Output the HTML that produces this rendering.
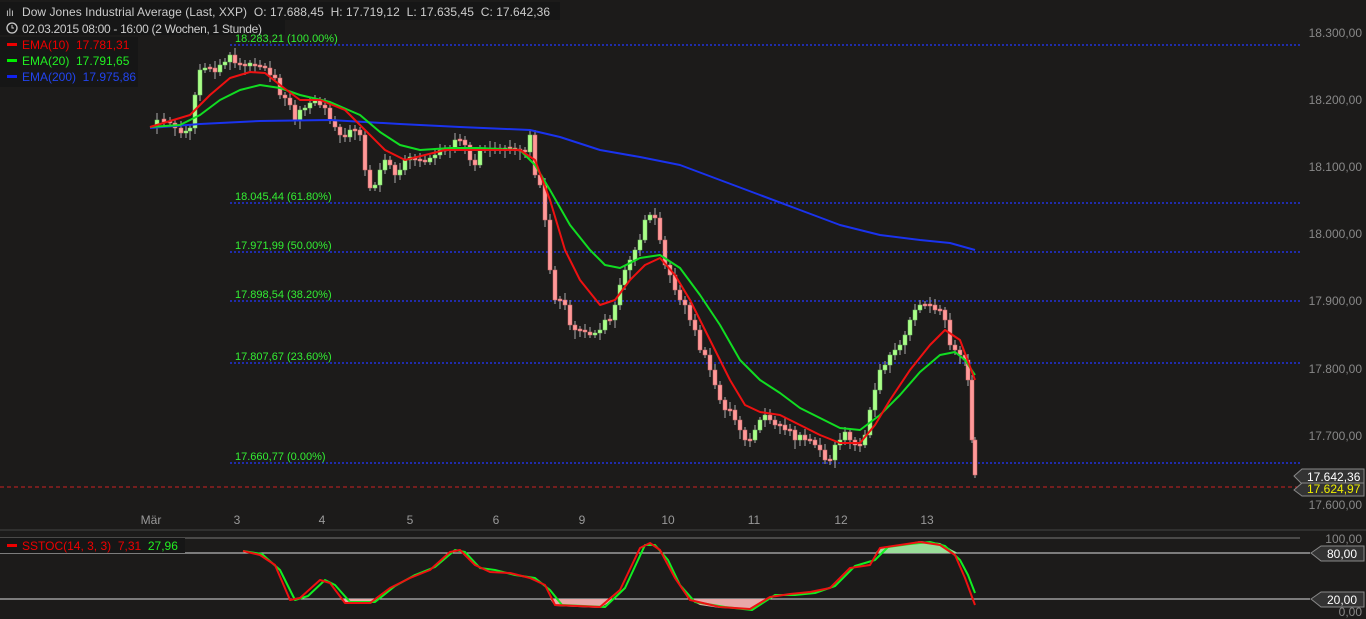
<!DOCTYPE html><html><head><meta charset="utf-8"><style>
body{margin:0;background:#1c1b1a;width:1366px;height:619px;overflow:hidden;font-family:"Liberation Sans",sans-serif}
svg{display:block}
text{white-space:pre}
</style></head><body>
<svg id="s" width="1366" height="619" xmlns="http://www.w3.org/2000/svg" font-family="Liberation Sans, sans-serif">
<rect width="1366" height="619" fill="#1c1b1a"/>
<g id="fib" stroke="#2233dd" stroke-width="1.5" stroke-dasharray="2,2">
<line x1="230" y1="45" x2="1300" y2="45"/><line x1="230" y1="203" x2="1300" y2="203"/>
<line x1="230" y1="252" x2="1300" y2="252"/><line x1="230" y1="301" x2="1300" y2="301"/>
<line x1="230" y1="363" x2="1300" y2="363"/><line x1="230" y1="463" x2="1300" y2="463"/>
</g>
<line x1="0" y1="487" x2="1300" y2="487" stroke="#cc2222" stroke-dasharray="4,3"/>
<g fill="#888" font-size="12" text-anchor="end">
<text x="1362" y="37">18.300,00</text><text x="1362" y="104">18.200,00</text><text x="1362" y="171">18.100,00</text>
<text x="1362" y="238">18.000,00</text><text x="1362" y="305">17.900,00</text><text x="1362" y="373">17.800,00</text>
<text x="1362" y="440">17.700,00</text><text x="1362" y="509">17.600,00</text>
<text x="1362" y="543">100,00</text><text x="1362" y="616">0,00</text>
</g>
<line x1="0" y1="530" x2="1366" y2="530" stroke="#444"/>
<g fill="#999" font-size="12" text-anchor="middle">
<text x="151" y="524">Mär</text><text x="237" y="524">3</text><text x="322" y="524">4</text><text x="410" y="524">5</text><text x="496" y="524">6</text><text x="582" y="524">9</text><text x="668" y="524">10</text><text x="754" y="524">11</text><text x="841" y="524">12</text><text x="927" y="524">13</text>
</g>
<line x1="0" y1="538" x2="1300" y2="538" stroke="#777"/>
<line x1="0" y1="553" x2="1310" y2="553" stroke="#ddd"/>
<line x1="0" y1="599" x2="1310" y2="599" stroke="#ddd"/>
<g id="candles"></g>
<g id="ind" fill="none" stroke-width="2"></g>
<g font-size="12">
<path d="M1294,476 L1302,469 H1364 V484 H1302 Z" fill="#333" stroke="#888"/><text x="1307" y="481" fill="#fff">17.642,36</text>
<path d="M1294,490 L1302,483 H1364 V496 H1302 Z" fill="#333" stroke="#888"/><text x="1307" y="493" fill="#ee0">17.624,97</text>
<path d="M1311,553 L1321,546 H1364 V561 H1321 Z" fill="#333" stroke="#888"/><text x="1327" y="558" fill="#fff">80,00</text>
<path d="M1311,599 L1321,592 H1364 V607 H1321 Z" fill="#333" stroke="#888"/><text x="1327" y="604" fill="#fff">20,00</text>
</g>
<rect x="0" y="2" width="560" height="18" fill="#161616"/><rect x="0" y="20" width="285" height="15" fill="#161616"/>
<rect x="0" y="37" width="138" height="50" fill="#161616"/>
<g fill="#33ee33" font-size="11">
<text x="235" y="42">18.283,21 (100.00%)</text><text x="235" y="200">18.045,44 (61.80%)</text>
<text x="235" y="249">17.971,99 (50.00%)</text><text x="235" y="298">17.898,54 (38.20%)</text>
<text x="235" y="360">17.807,67 (23.60%)</text><text x="235" y="460">17.660,77 (0.00%)</text>
</g>
<g font-size="12">
<text x="22" y="16" fill="#ccc" textLength="528">Dow Jones Industrial Average (Last, XXP)&#160; O: 17.688,45&#160; H: 17.719,12&#160; L: 17.635,45&#160; C: 17.642,36</text>
<text x="6" y="16" fill="#ccc" font-size="10">ılı</text>
<circle cx="12" cy="28" r="5" fill="none" stroke="#ccc" stroke-width="1.3"/><path d="M12,25 V28 H14" stroke="#ccc" fill="none"/>
<text x="22" y="33" fill="#ccc" textLength="240">02.03.2015 08:00 - 16:00 (2 Wochen, 1 Stunde)</text>
<rect x="7" y="43" width="10" height="3" fill="#e00"/><text x="22" y="49" fill="#e00">EMA(10)&#160;&#160;17.781,31</text>
<rect x="7" y="59" width="10" height="3" fill="#0e0"/><text x="22" y="65" fill="#2e2">EMA(20)&#160;&#160;17.791,65</text>
<rect x="7" y="75" width="10" height="3" fill="#12e"/><text x="22" y="81" fill="#24e">EMA(200)&#160;&#160;17.975,86</text>
<rect x="0" y="538" width="185" height="15" fill="#161616"/>
<rect x="7" y="544" width="10" height="3" fill="#e00"/><text x="22" y="550" fill="#e00">SSTOC(14, 3, 3)&#160;&#160;7,31&#160;&#160;<tspan fill="#2e2">27,96</tspan></text>
</g>
</svg>
<script>
function P(s){return s.trim().split(/\s+/).map(function(t){return t.split(',').map(Number)})}
var c=P("150,127 157,120 164,121 170,123 175,128 181,133 186,131 190,128 195,95 200,70 205,68 210,68 215,72 220,65 225,62 230,55 235,63 240,65 245,65 250,64 255,66 260,66 265,68 270,75 275,78 280,95 285,98 290,105 295,120 300,110 305,108 310,103 315,100 320,105 325,108 330,120 335,127 340,135 345,137 350,130 355,130 360,135 365,170 370,188 375,185 380,170 385,160 390,165 395,175 400,170 405,160 410,157 415,160 420,160 425,162 430,158 435,155 440,150 445,150 450,148 455,140 460,140 465,145 470,160 475,165 480,150 485,148 490,150 495,148 500,150 505,148 510,148 515,150 520,150 525,152 530,135 535,175 540,185 545,220 550,270 555,300 560,300 565,305 570,325 575,330 580,330 585,332 590,335 595,333 600,330 605,320 610,320 615,305 620,285 625,270 630,260 635,250 640,240 645,220 650,215 655,218 660,240 665,265 670,275 675,290 680,300 685,305 690,320 695,330 700,350 705,355 710,370 715,385 720,400 725,410 730,410 735,420 740,430 745,440 750,440 755,430 760,420 765,415 770,420 775,425 780,425 785,430 790,430 795,440 800,435 805,440 810,440 815,445 820,450 825,460 830,460 835,445 840,440 845,432 850,440 855,445 860,445 865,435 870,410 875,390 880,370 885,365 890,355 895,350 900,345 905,335 910,320 915,310 920,305 925,305 930,305 935,310 940,310 945,320 950,345 955,350 960,355 965,360 968,380 972,440 975,475");
var g=document.getElementById('candles'),h='';
for(var i=1;i<c.length;i++){var o=c[i-1][1],cl=c[i][1],x=c[i][0];var t=Math.min(o,cl),b=Math.max(o,cl);if(b-t<2){t-=1;b+=1}
var col=cl<o?'#aaff88':'#ff9999';var w=(i*37%11);
h+='<line x1="'+x+'" x2="'+x+'" y1="'+(t-3-w%5)+'" y2="'+(b+3+w%7)+'" stroke="#aaa"/>';
h+='<rect x="'+(x-2)+'" y="'+t+'" width="4" height="'+(b-t)+'" fill="'+col+'" stroke="'+(cl<o?'#7c6':'#c66')+'" stroke-width="0.5"/>';}
g.innerHTML=h;
function pl(s,col,w){return '<polyline points="'+s+'" stroke="'+col+'" stroke-width="'+(w||2)+'" fill="none" stroke-linejoin="round"/>'}
var ind='';
ind+=pl("150,128 200,124 260,121 330,120 400,124 460,127 530,130 560,137 600,150 640,157 680,165 720,180 760,195 800,210 840,225 880,235 920,240 950,243 975,250","#1a33ee");
ind+='<polygon points="875,553 880,548 900,545 920,541 940,543 952,550 958,553" fill="#99dd99"/>';
ind+='<polygon points="340,599 345,603 370,604 380,599" fill="#e8a8a8"/><polygon points="550,599 555,606 600,608 615,599" fill="#e8a8a8"/><polygon points="688,599 700,605 720,608 750,609 765,599" fill="#e8a8a8"/>';
ind+=pl("150,127 180,125 200,115 220,100 240,90 260,85 280,88 300,95 330,102 360,115 380,132 400,145 420,150 450,148 480,148 520,150 535,165 550,190 570,225 590,250 605,265 620,268 640,258 660,255 680,268 700,295 720,325 740,360 760,380 780,393 800,408 820,418 840,428 860,430 880,415 900,395 920,372 940,355 955,352 965,360 975,375","#11dd22");
ind+=pl("150,127 190,115 210,95 230,78 250,72 265,73 280,85 300,100 320,100 345,110 365,130 385,150 405,160 425,155 445,150 470,150 500,150 520,150 535,160 550,200 565,250 580,280 600,305 615,300 630,280 645,265 660,258 675,275 690,300 710,340 730,380 745,405 760,412 780,415 800,425 820,435 840,443 860,443 875,425 890,400 910,370 930,345 945,330 960,340 975,380","#ee1111");
ind+=pl("243,551 262,554 280,570 295,600 308,596 325,580 335,585 350,602 375,602 395,586 415,575 435,567 455,550 465,552 480,568 495,570 515,575 535,578 550,590 562,605 605,607 625,588 645,545 655,545 668,560 680,585 695,602 725,607 752,610 775,595 795,595 815,593 835,586 855,566 875,560 888,547 910,544 930,542 945,546 960,560 968,575 975,593","#11ee22");
ind+=pl("243,551 260,555 275,565 290,600 300,598 320,580 330,583 345,603 370,603 390,588 410,578 430,570 450,552 460,550 475,565 490,572 510,573 530,578 545,585 555,605 600,607 620,590 640,548 650,543 660,550 675,578 690,600 720,607 750,609 770,597 790,594 810,592 830,588 850,568 870,565 880,548 900,545 920,542 940,545 955,555 965,578 975,605","#ee1111");
document.getElementById('ind').innerHTML=ind;
</script>
</body></html>
